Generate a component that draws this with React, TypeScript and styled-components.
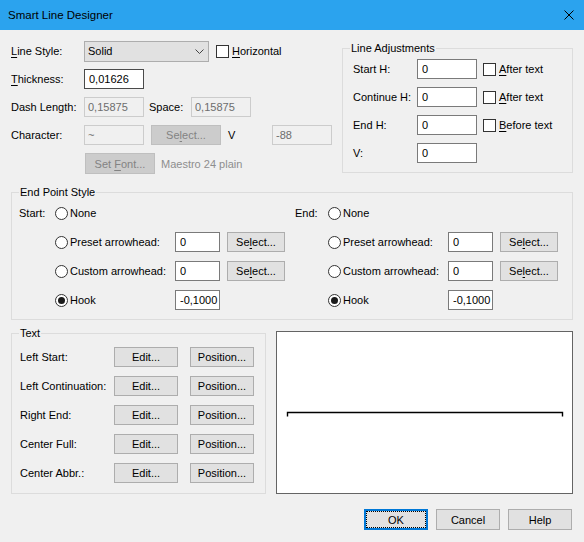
import React from "react";
import styled, { createGlobalStyle } from "styled-components";

const GlobalStyle = createGlobalStyle`
  html, body {
    margin: 0;
    padding: 0;
    background: #f0f0f0;
  }
  body {
    font-family: "Liberation Sans", Arial, sans-serif;
    font-size: 11px;
    color: #000;
  }
`;

export default function App() {
  return (
    <Window>
      <GlobalStyle />
      <TitleBar>
        <Title>Smart Line Designer</Title>
        <CloseIcon viewBox="0 0 10 10" width="10" height="10">
          <path d="M0.5 0.5 L9.5 9.5 M9.5 0.5 L0.5 9.5" stroke="#000" strokeWidth="1" />
        </CloseIcon>
      </TitleBar>

      <Body>
        <TopArea>
          <FormColumn>
            <Row>
              <Label width={73}>
                <U>L</U>ine Style:
              </Label>
              <Combo>
                <span>Solid</span>
                <svg width="9" height="5" viewBox="0 0 9 5">
                  <path d="M0.5 0.5 L4.5 4.5 L8.5 0.5" fill="none" stroke="#444" strokeWidth="1" />
                </svg>
              </Combo>
              <CheckOption style={{ marginLeft: 7 }}>
                <CheckBox />
                <span>
                  <U>H</U>orizontal
                </span>
              </CheckOption>
            </Row>
            <Row>
              <Label width={73}>
                <U>T</U>hickness:
              </Label>
              <TextBox width={60} dark readOnly defaultValue="0,01626" />
            </Row>
            <Row>
              <Label width={73}>Dash Length:</Label>
              <TextBox width={60} disabled readOnly defaultValue="0,15875" />
              <Label width={42} style={{ marginLeft: 5 }}>
                Space:
              </Label>
              <TextBox width={60} disabled readOnly defaultValue="0,15875" />
            </Row>
            <Row>
              <Label width={73}>Character:</Label>
              <TextBox width={60} disabled readOnly defaultValue="~" />
              <Button width={70} disabled style={{ marginLeft: 7 }}>
                Se<U>l</U>ect...
              </Button>
              <Label width={44} style={{ marginLeft: 7 }}>
                V
              </Label>
              <TextBox width={60} disabled readOnly defaultValue="-88" />
            </Row>
            <Row tall>
              <Button width={70} disabled tall style={{ marginLeft: 74 }}>
                Set <U>F</U>ont...
              </Button>
              <MutedText>Maestro 24 plain</MutedText>
            </Row>
          </FormColumn>

          <Group width={231}>
            <Legend>Line Adjustments</Legend>
            <GroupInner top={4} bottom={9} left={10} gap={8}>
              {[
                { label: "Start H:", check: "After text", key: "A" },
                { label: "Continue H:", check: "After text", key: "A" },
                { label: "End H:", check: "Before text", key: "B" },
                { label: "V:" },
              ].map((r) => (
                <Row key={r.label}>
                  <Label width={64}>{r.label}</Label>
                  <TextBox width={60} readOnly defaultValue="0" />
                  {r.check && (
                    <CheckOption style={{ marginLeft: 6 }}>
                      <CheckBox />
                      <span>
                        <U>{r.key}</U>
                        {r.check.slice(1)}
                      </span>
                    </CheckOption>
                  )}
                </Row>
              ))}
            </GroupInner>
          </Group>
        </TopArea>

        <Group style={{ marginTop: 11 }}>
          <Legend>End Point Style</Legend>
          <GroupInner top={4} bottom={9} left={7} gap={0}>
            <EndPointGrid>
              <EndPointSide side="Start:" labelWidth={36} />
              <EndPointSide side="End:" labelWidth={33} />
            </EndPointGrid>
          </GroupInner>
        </Group>

        <MiddleArea>
          <Group width={255}>
            <Legend>Text</Legend>
            <GroupInner top={7} bottom={10} left={8} gap={9}>
              {["Left Start:", "Left Continuation:", "Right End:", "Center Full:", "Center Abbr.:"].map(
                (t) => (
                  <Row key={t}>
                    <Label width={94}>{t}</Label>
                    <Button width={64}>Edit...</Button>
                    <Button width={64} style={{ marginLeft: 12 }}>
                      Position...
                    </Button>
                  </Row>
                )
              )}
            </GroupInner>
          </Group>
          <Preview>
            <svg width="100%" height="100%" viewBox="0 0 295 161" preserveAspectRatio="none">
              <path d="M10.5 84.5 V80.5 H285.5 V84.5" fill="none" stroke="#000" strokeWidth="1.4" />
            </svg>
          </Preview>
        </MiddleArea>

        <Footer>
          <DialogButton focused>OK</DialogButton>
          <DialogButton>Cancel</DialogButton>
          <DialogButton>Help</DialogButton>
        </Footer>
      </Body>
    </Window>
  );
}

function EndPointSide(props: { side: string; labelWidth: number }) {
  return (
    <SideColumn>
      <Row>
        <Label width={props.labelWidth}>{props.side}</Label>
        <RadioOption>
          <Radio />
          <span>None</span>
        </RadioOption>
      </Row>
      <Row>
        <Label width={props.labelWidth} />
        <RadioOption>
          <Radio />
          <span>Preset arrowhead:</span>
        </RadioOption>
        <TextBox width={45} readOnly defaultValue="0" />
        <Button width={58} style={{ marginLeft: 7 }}>
          Se<U>l</U>ect...
        </Button>
      </Row>
      <Row>
        <Label width={props.labelWidth} />
        <RadioOption>
          <Radio />
          <span>Custom arrowhead:</span>
        </RadioOption>
        <TextBox width={45} readOnly defaultValue="0" />
        <Button width={58} style={{ marginLeft: 7 }}>
          Se<U>l</U>ect...
        </Button>
      </Row>
      <Row>
        <Label width={props.labelWidth} />
        <RadioOption>
          <Radio checked />
          <span>Hook</span>
        </RadioOption>
        <TextBox width={45} readOnly defaultValue="-0,1000" />
      </Row>
    </SideColumn>
  );
}

const Window = styled.div`
  width: 584px;
  height: 542px;
  background: #f0f0f0;
  display: flex;
  flex-direction: column;
  overflow: hidden;
`;

const TitleBar = styled.div`
  flex: none;
  height: 30px;
  background: #2ba3ee;
  display: flex;
  align-items: center;
  justify-content: space-between;
  padding-left: 8px;
`;

const Title = styled.span`
  font-size: 11.5px;
  color: #000;
`;

const CloseIcon = styled.svg`
  margin-right: 10px;
`;

const Body = styled.div`
  padding: 11px 11px 0 11px;
  display: flex;
  flex-direction: column;
`;

const TopArea = styled.div`
  display: flex;
  justify-content: space-between;
  align-items: flex-start;
`;

const FormColumn = styled.div`
  display: flex;
  flex-direction: column;
  gap: 8px;
`;

const Row = styled.div<{ tall?: boolean }>`
  display: flex;
  align-items: center;
  height: ${(p) => (p.tall ? 21 : 20)}px;
  white-space: nowrap;
`;

const Label = styled.span<{ width?: number }>`
  flex: none;
  width: ${(p) => (p.width ? `${p.width}px` : "auto")};
`;

const U = styled.span`
  text-decoration: underline;
  text-underline-offset: 2px;
`;

const MutedText = styled.span`
  margin-left: 6px;
  color: #8e8e8e;
`;

const Combo = styled.div`
  box-sizing: border-box;
  width: 125px;
  height: 21px;
  border: 1px solid #adadad;
  background: #e1e1e1;
  display: flex;
  align-items: center;
  justify-content: space-between;
  padding: 0 4px 0 3px;
`;

const TextBox = styled.input<{ width: number; dark?: boolean }>`
  box-sizing: border-box;
  flex: none;
  width: ${(p) => p.width}px;
  height: 20px;
  margin: 0;
  padding: 0 0 0 4px;
  font: inherit;
  color: #000;
  background: #fff;
  border: 1px solid ${(p) => (p.dark ? "#4a4a4a" : "#7a7a7a")};
  border-radius: 0;
  outline: none;

  &:disabled {
    padding-left: 3px;
    background: #f0f0f0;
    border-color: #cccccc;
    color: #6d6d6d;
    -webkit-text-fill-color: #6d6d6d;
    opacity: 1;
  }
`;

const Button = styled.button<{ width: number; tall?: boolean }>`
  box-sizing: border-box;
  flex: none;
  width: ${(p) => p.width}px;
  height: ${(p) => (p.tall ? 21 : 20)}px;
  margin: 0;
  padding: 0;
  font: inherit;
  color: #000;
  background: #e1e1e1;
  border: 1px solid #adadad;
  border-radius: 0;

  &:disabled {
    background: #cccccc;
    border-color: #bfbfbf;
    color: #838383;
  }
`;

const DialogButton = styled.button<{ focused?: boolean }>`
  box-sizing: border-box;
  width: 64px;
  height: 21px;
  margin: 0;
  padding: 0;
  font: inherit;
  color: #000;
  background: #e1e1e1;
  border: ${(p) => (p.focused ? "2px solid #0078d7" : "1px solid #adadad")};
  border-radius: 0;
  outline: ${(p) => (p.focused ? "1px dotted #000" : "none")};
  outline-offset: -3px;
`;

const CheckOption = styled.label`
  display: flex;
  align-items: center;
  gap: 3px;
`;

const CheckBox = styled.span`
  box-sizing: border-box;
  width: 13px;
  height: 13px;
  border: 1px solid #333;
  background: #fff;
`;

const RadioOption = styled.label`
  flex: none;
  width: 120px;
  display: flex;
  align-items: center;
  gap: 2px;
`;

const Radio = styled.span<{ checked?: boolean }>`
  box-sizing: border-box;
  width: 13px;
  height: 13px;
  border: 1px solid #333;
  border-radius: 50%;
  background: #fff;
  display: flex;
  align-items: center;
  justify-content: center;

  &::after {
    content: "";
    width: 7px;
    height: 7px;
    border-radius: 50%;
    background: ${(p) => (p.checked ? "#1a1a1a" : "transparent")};
  }
`;

const Group = styled.fieldset<{ width?: number }>`
  box-sizing: border-box;
  flex: none;
  width: ${(p) => (p.width ? `${p.width}px` : "auto")};
  margin: 0;
  padding: 0;
  min-width: 0;
  border: 1px solid #dcdcdc;
  border-radius: 0;
`;

const Legend = styled.legend`
  margin-left: 7px;
  padding: 0 1px;
  line-height: 14px;
  height: 14px;
`;

const GroupInner = styled.div<{ top: number; bottom: number; left: number; gap: number }>`
  display: flex;
  flex-direction: column;
  gap: ${(p) => p.gap}px;
  padding: ${(p) => `${p.top}px 0 ${p.bottom}px ${p.left}px`};
`;

const EndPointGrid = styled.div`
  display: grid;
  grid-template-columns: 276px 1fr;
`;

const SideColumn = styled.div`
  display: flex;
  flex-direction: column;
  gap: 9px;
`;

const MiddleArea = styled.div`
  display: flex;
  align-items: flex-end;
  margin-top: 6px;
`;

const Preview = styled.div`
  box-sizing: border-box;
  flex: 1;
  height: 163px;
  margin-left: 10px;
  background: #fff;
  border: 1px solid #646464;
  display: flex;
`;

const Footer = styled.div`
  display: flex;
  justify-content: flex-end;
  gap: 8px;
  margin-top: 15px;
  margin-right: 1px;
`;
